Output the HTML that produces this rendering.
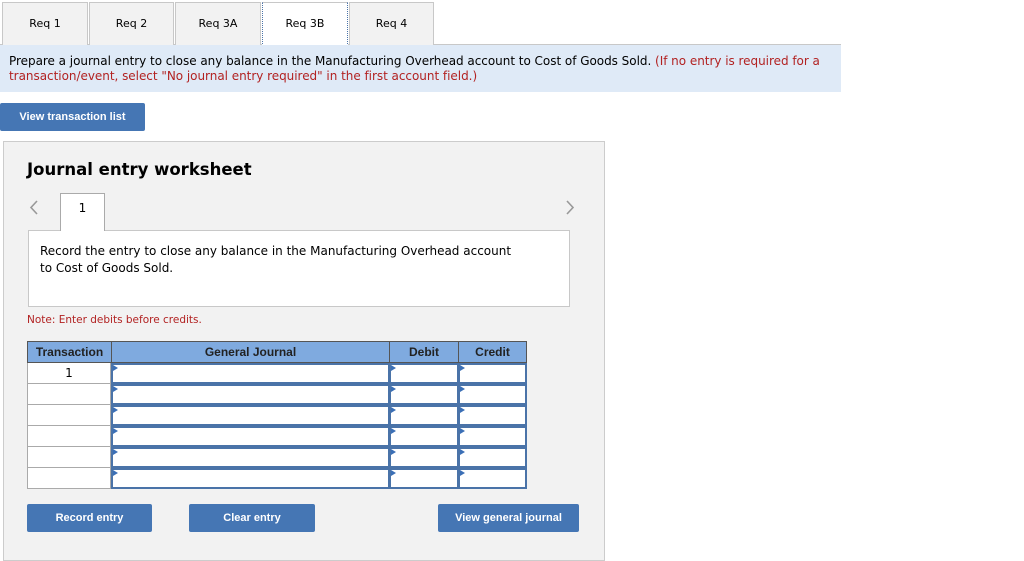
<!DOCTYPE html>
<html><head><meta charset="utf-8"><style>
*{margin:0;padding:0;box-sizing:border-box}
body{width:1024px;height:555px;background:#fff;position:relative;overflow:hidden;font-family:"DejaVu Sans","Liberation Sans",sans-serif;font-size:12px;color:#000}
.a{position:absolute}
.tab{position:absolute;top:2px;height:43px;background:#f2f2f2;border:1px solid #c8c8c8;border-bottom:none;text-align:center;line-height:42px;font-size:11px}
.btn{position:absolute;background:#4576b4;color:#fff;font-family:"Liberation Sans",sans-serif;font-weight:bold;font-size:11px;text-align:center;line-height:28px;height:28px;border-radius:2px}
.th{position:absolute;top:341px;height:22px;background:#7faadf;border:1px solid #555;font-family:"Liberation Sans",sans-serif;font-weight:bold;font-size:12px;text-align:center;line-height:20px;color:#222}
.c{position:absolute;background:#fff;border:2px solid #4a73a8;height:21px}
.c:before{content:"";position:absolute;left:0;top:0;border-left:5px solid #3b6fb6;border-top:3px solid transparent;border-bottom:3px solid transparent}
.t{position:absolute;left:27px;width:84px;height:21px;background:#fff;border:1px solid #aaa;border-top:none}
</style></head><body>
<div class="a" style="left:0;top:44px;width:841px;height:1px;background:#c8c8c8"></div>
<div class="tab" style="left:2px;width:86px">Req 1</div>
<div class="tab" style="left:89px;width:85px">Req 2</div>
<div class="tab" style="left:175px;width:86px">Req 3A</div>
<div class="tab" style="left:262px;width:86px;background:#fff;border:1px dotted #4a73a8;border-top:1px solid #c8c8c8;height:44px">Req 3B</div>
<div class="tab" style="left:349px;width:85px">Req 4</div>
<div class="a" style="left:0;top:45px;width:841px;height:47px;background:#dfeaf7;padding:9px 9px;line-height:15px;font-size:12px;letter-spacing:-0.03px">Prepare a journal entry to close any balance in the Manufacturing Overhead account to Cost of Goods Sold. <span style="color:#b22222">(If no entry is required for a transaction/event, select "No journal entry required" in the first account field.)</span></div>
<div class="btn" style="left:0;top:103px;width:145px">View transaction list</div>
<div class="a" style="left:3px;top:141px;width:602px;height:420px;background:#f2f2f2;border:1px solid #ccc"></div>
<div class="a" style="left:27px;top:160px;font-size:16.5px;font-weight:bold">Journal entry worksheet</div>
<svg class="a" style="left:28px;top:199px" width="12" height="18"><path d="M9 2 L3 8.5 L9 15" fill="none" stroke="#999" stroke-width="1.6"/></svg>
<svg class="a" style="left:564px;top:199px" width="12" height="18"><path d="M3 2 L9 8.5 L3 15" fill="none" stroke="#999" stroke-width="1.6"/></svg>
<div class="a" style="left:28px;top:230px;width:542px;height:77px;background:#fff;border:1px solid #c8c8c8;padding:12px 11px;line-height:17px;font-size:12px">Record the entry to close any balance in the Manufacturing Overhead account<br>to Cost of Goods Sold.</div>
<div class="a" style="left:60px;top:193px;width:45px;height:38px;background:#fff;border:1px solid #aaa;border-bottom:none;text-align:center;line-height:28px">1</div>
<div class="a" style="left:27px;top:314px;font-size:10.5px;color:#b22222">Note: Enter debits before credits.</div>
<div class="th" style="left:27px;width:85px">Transaction</div>
<div class="th" style="left:111px;width:279px">General Journal</div>
<div class="th" style="left:389px;width:70px">Debit</div>
<div class="th" style="left:458px;width:69px">Credit</div>
<div class="t" style="top:363px;text-align:center;line-height:20px">1</div>
<div class="t" style="top:384px"></div><div class="t" style="top:405px"></div><div class="t" style="top:426px"></div><div class="t" style="top:447px"></div><div class="t" style="top:468px"></div>
<div class="c" style="left:111px;top:363px;width:279px"></div><div class="c" style="left:389px;top:363px;width:70px"></div><div class="c" style="left:458px;top:363px;width:69px"></div>
<div class="c" style="left:111px;top:384px;width:279px"></div><div class="c" style="left:389px;top:384px;width:70px"></div><div class="c" style="left:458px;top:384px;width:69px"></div>
<div class="c" style="left:111px;top:405px;width:279px"></div><div class="c" style="left:389px;top:405px;width:70px"></div><div class="c" style="left:458px;top:405px;width:69px"></div>
<div class="c" style="left:111px;top:426px;width:279px"></div><div class="c" style="left:389px;top:426px;width:70px"></div><div class="c" style="left:458px;top:426px;width:69px"></div>
<div class="c" style="left:111px;top:447px;width:279px"></div><div class="c" style="left:389px;top:447px;width:70px"></div><div class="c" style="left:458px;top:447px;width:69px"></div>
<div class="c" style="left:111px;top:468px;width:279px"></div><div class="c" style="left:389px;top:468px;width:70px"></div><div class="c" style="left:458px;top:468px;width:69px"></div>
<div class="btn" style="left:27px;top:504px;width:125px">Record entry</div>
<div class="btn" style="left:189px;top:504px;width:126px">Clear entry</div>
<div class="btn" style="left:438px;top:504px;width:141px">View general journal</div>
</body></html>
